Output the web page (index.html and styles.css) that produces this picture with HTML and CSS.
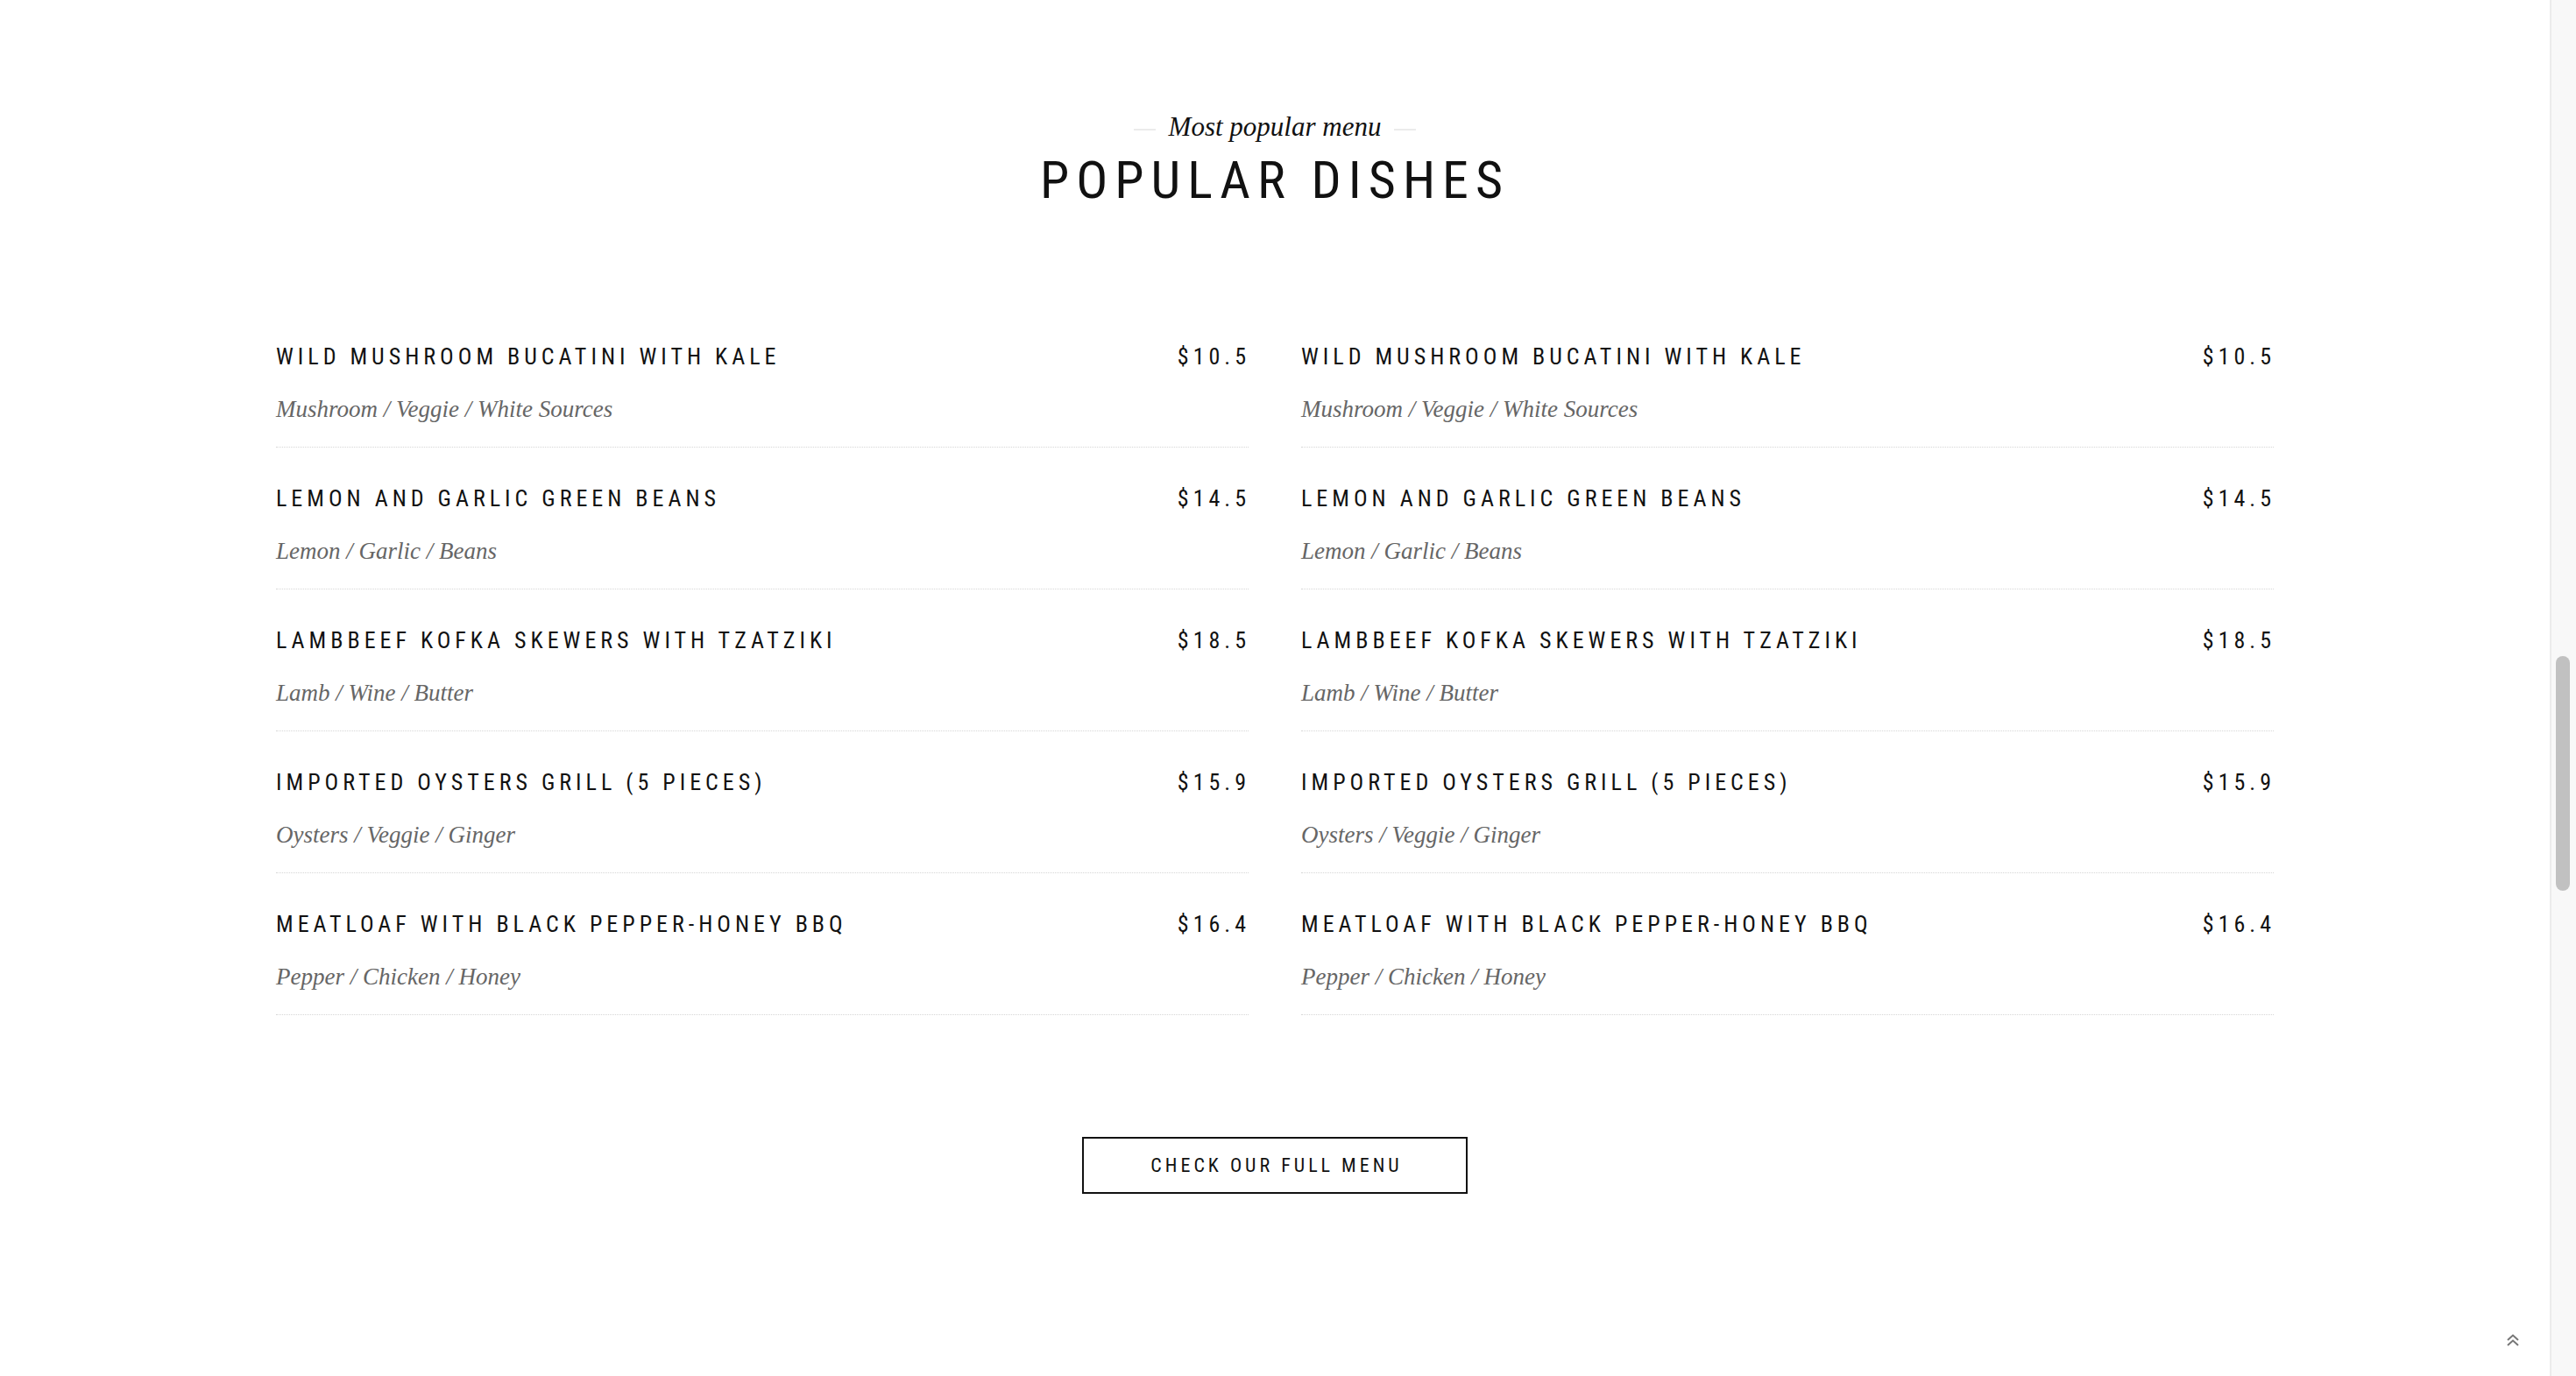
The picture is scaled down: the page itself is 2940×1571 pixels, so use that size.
FILE: index.html
```html
<!DOCTYPE html>
<html lang="en">
<head>
<meta charset="utf-8">
<title>Popular Dishes</title>
<link rel="stylesheet" href="styles.css">
</head>
<body>
<section class="menu-section">
  <header class="section-head">
    <p class="section-sub"><span class="dash"></span><span>Most popular menu</span><span class="dash"></span></p>
    <h2 class="section-title">POPULAR DISHES</h2>
  </header>
  <div class="menu-grid">
    <div class="menu-col">
      <div class="dish"><div class="dish-top"><h3 class="dish-name">WILD MUSHROOM BUCATINI WITH KALE</h3><span class="dish-price">$10.5</span></div><p class="dish-desc">Mushroom / Veggie / White Sources</p></div>
      <div class="dish"><div class="dish-top"><h3 class="dish-name">LEMON AND GARLIC GREEN BEANS</h3><span class="dish-price">$14.5</span></div><p class="dish-desc">Lemon / Garlic / Beans</p></div>
      <div class="dish"><div class="dish-top"><h3 class="dish-name">LAMBBEEF KOFKA SKEWERS WITH TZATZIKI</h3><span class="dish-price">$18.5</span></div><p class="dish-desc">Lamb / Wine / Butter</p></div>
      <div class="dish"><div class="dish-top"><h3 class="dish-name">IMPORTED OYSTERS GRILL (5 PIECES)</h3><span class="dish-price">$15.9</span></div><p class="dish-desc">Oysters / Veggie / Ginger</p></div>
      <div class="dish"><div class="dish-top"><h3 class="dish-name">MEATLOAF WITH BLACK PEPPER-HONEY BBQ</h3><span class="dish-price">$16.4</span></div><p class="dish-desc">Pepper / Chicken / Honey</p></div>
    </div>
    <div class="menu-col">
      <div class="dish"><div class="dish-top"><h3 class="dish-name">WILD MUSHROOM BUCATINI WITH KALE</h3><span class="dish-price">$10.5</span></div><p class="dish-desc">Mushroom / Veggie / White Sources</p></div>
      <div class="dish"><div class="dish-top"><h3 class="dish-name">LEMON AND GARLIC GREEN BEANS</h3><span class="dish-price">$14.5</span></div><p class="dish-desc">Lemon / Garlic / Beans</p></div>
      <div class="dish"><div class="dish-top"><h3 class="dish-name">LAMBBEEF KOFKA SKEWERS WITH TZATZIKI</h3><span class="dish-price">$18.5</span></div><p class="dish-desc">Lamb / Wine / Butter</p></div>
      <div class="dish"><div class="dish-top"><h3 class="dish-name">IMPORTED OYSTERS GRILL (5 PIECES)</h3><span class="dish-price">$15.9</span></div><p class="dish-desc">Oysters / Veggie / Ginger</p></div>
      <div class="dish"><div class="dish-top"><h3 class="dish-name">MEATLOAF WITH BLACK PEPPER-HONEY BBQ</h3><span class="dish-price">$16.4</span></div><p class="dish-desc">Pepper / Chicken / Honey</p></div>
    </div>
  </div>
  <div class="cta-wrap"><a class="cta" href="#">CHECK OUR FULL MENU</a></div>
</section>
<a class="to-top" href="#" aria-label="Back to top">
  <svg width="16" height="16" viewBox="0 0 16 16" fill="none" stroke="#777" stroke-width="2"><path d="M2 8 L8 2.5 L14 8"/><path d="M2 14 L8 8.5 L14 14"/></svg>
</a>
<div class="scroll-rail" aria-hidden="true"><div class="scroll-thumb"></div></div>
</body>
</html>
```

FILE: styles.css
```css
body {
  margin: 0;
  padding-right: 30px;
  background: #fff;
  color: #111;
  font-family: "Roboto Condensed", "Roboto", sans-serif;
}
.menu-section {
  padding-top: 128px;
  height: 1443px;
}
.section-head {
  text-align: center;
}
.section-sub {
  margin: 0;
  display: flex;
  justify-content: center;
  align-items: center;
  gap: 15px;
  font-family: "Liberation Serif", serif;
  font-style: italic;
  font-size: 31px;
  line-height: 34px;
  color: #111;
}
.dash {
  display: block;
  width: 25px;
  height: 2px;
  background: #ebebeb;
  margin-top: 6px;
}
.section-title {
  margin: 9px 0 0;
  font-weight: 400;
  font-size: 60px;
  line-height: 70px;
  letter-spacing: 8px;
  font-stretch: 75%;
}
.menu-grid {
  width: 2280px;
  margin: 108px auto 0;
  display: grid;
  grid-template-columns: 1fr 1fr;
  column-gap: 60px;
}
.dish {
  padding: 42px 0 27px;
  border-bottom: 1px dotted #d6d6d6;
}
.dish-top {
  display: flex;
  justify-content: space-between;
  align-items: baseline;
}
.dish-name, .dish-price {
  margin: 0;
  font-weight: 400;
  font-size: 26px;
  line-height: 32px;
  letter-spacing: 5px;
  font-stretch: 75%;
  color: #111;
}
.dish-price {
  margin-right: -2px;
}
.dish-desc {
  margin: 28px 0 0;
  font-family: "Liberation Serif", serif;
  font-style: italic;
  font-size: 27px;
  line-height: 32px;
  color: #666;
}
.cta-wrap {
  display: flex;
  justify-content: center;
  margin-top: 139px;
}
.cta {
  display: flex;
  align-items: center;
  justify-content: center;
  box-sizing: border-box;
  width: 440px;
  height: 65px;
  border: 2px solid #111;
  color: #111;
  text-decoration: none;
  font-size: 22px;
  letter-spacing: 4px;
  font-stretch: 75%;
  padding-left: 4px;
}
.to-top {
  position: fixed;
  right: 64px;
  bottom: 33px;
  display: block;
  width: 16px;
  height: 16px;
}
.to-top svg {
  display: block;
}
.scroll-rail {
  position: fixed;
  top: 0;
  right: 0;
  bottom: 0;
  width: 28px;
  background: #f8f8f8;
  border-left: 2px solid #ececec;
}
.scroll-thumb {
  position: absolute;
  top: 749px;
  left: 5px;
  width: 16px;
  height: 268px;
  border-radius: 8px;
  background: #c1c1c1;
}
```
